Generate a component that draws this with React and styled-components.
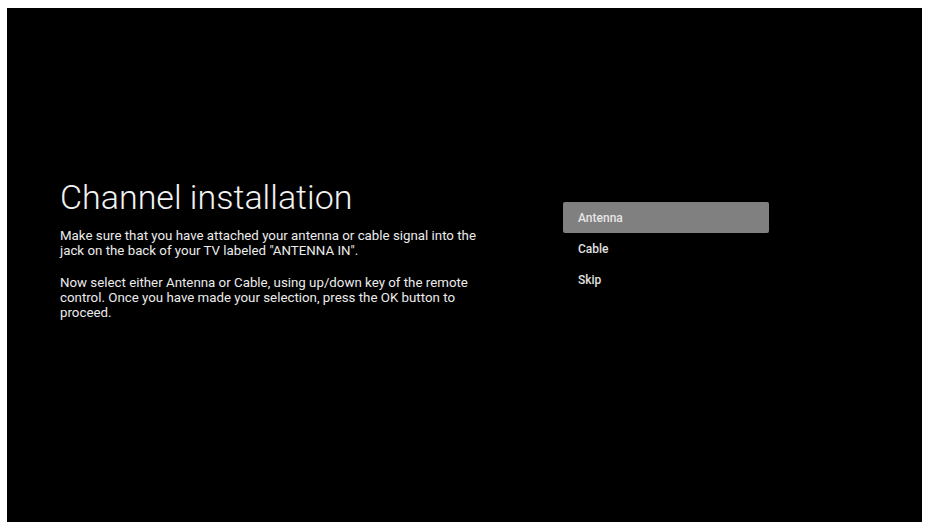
import styled, { createGlobalStyle } from "styled-components";

const GlobalStyle = createGlobalStyle`
  html, body {
    margin: 0;
    padding: 0;
    background: #ffffff;
  }
  body {
    padding: 8px 9px 9px 7px;
    font-family: Roboto, "Liberation Sans", sans-serif;
  }
`;

const items = ["Antenna", "Cable", "Skip"];

const App = () => {
  return (
    <>
      <GlobalStyle />
      <Screen>
        <InfoPanel>
          <Title>Channel installation</Title>
          <Paragraph>
            Make sure that you have attached your antenna or cable signal into the
            jack on the back of your TV labeled "ANTENNA IN".
          </Paragraph>
          <Paragraph>
            Now select either Antenna or Cable, using up/down key of the remote
            control. Once you have made your selection, press the OK button to
            proceed.
          </Paragraph>
        </InfoPanel>
        <Menu>
          {items.map((item, i) => (
            <MenuItem key={item} $selected={i === 0}>
              {item}
            </MenuItem>
          ))}
        </Menu>
      </Screen>
    </>
  );
};

const Screen = styled.div`
  display: flex;
  align-items: flex-start;
  height: 514px;
  background-color: #000000;
  padding: 167px 0 0 53px;
  box-sizing: border-box;
`;

const InfoPanel = styled.div`
  width: 428px;
  margin-right: 75px;
`;

const Title = styled.h1`
  margin: 0 0 9px;
  font-family: Roboto, "Liberation Sans", sans-serif;
  font-weight: 300;
  font-size: 34px;
  line-height: 44px;
  color: #f2f2f2;
`;

const Paragraph = styled.p`
  margin: 0 0 17px;
  font-size: 13.3px;
  line-height: 15px;
  color: #ececec;
`;

const Menu = styled.div`
  display: flex;
  flex-direction: column;
  width: 206px;
  margin-top: 27px;
`;

const MenuItem = styled.div`
  height: 31px;
  display: flex;
  align-items: center;
  padding-left: 15px;
  border-radius: 2px;
  font-size: 12px;
  font-weight: 500;
  color: ${({ $selected }) => ($selected ? "#e6e6e6" : "#e0e0e0")};
  background-color: ${({ $selected }) => ($selected ? "#808080" : "transparent")};
`;

export default App;
